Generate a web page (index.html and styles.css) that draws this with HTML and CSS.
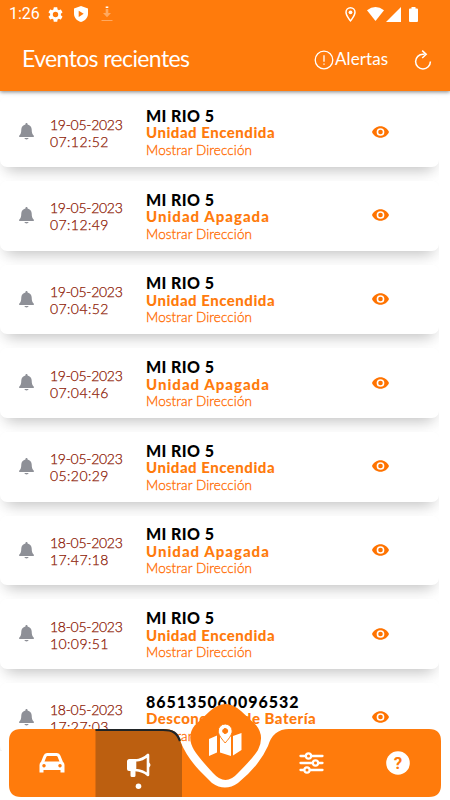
FILE: index.html
```html
<!DOCTYPE html>
<html lang="es">
<head>
<meta charset="utf-8">
<title>Eventos recientes</title>
<link rel="stylesheet" href="styles.css">
</head>
<body>
<svg class="defs" aria-hidden="true">
  <symbol id="bell" viewBox="0 0 14 16"><path d="M7 0C6.400 0 6 .4 6 1v.4C3.700 1.900 2.100 3.600 2.100 6c0 3-.6 4.500-1.800 5.700-.6.600-.2 1.500.6 1.500h12.200c.8 0 1.200-.9.600-1.500C12.500 10.500 11.900 9 11.900 6c0-2.400-1.600-4.100-3.900-4.600V1c0-.6-.4-1-1-1zM4.900 14.200a2.200 1.800 0 0 0 4.200 0z"/></symbol>
  <symbol id="eye" viewBox="1 4.500 22 15"><path d="M12 4.500C7 4.500 2.730 7.610 1 12c1.730 4.390 6 7.500 11 7.500s9.270-3.110 11-7.500c-1.730-4.390-6-7.500-11-7.500zM12 17a5 5 0 1 1 0-10 5 5 0 0 1 0 10zm0-8a3 3 0 1 0 0 6 3 3 0 0 0 0-6z"/></symbol>
</svg>
<div class="phone">
  <header class="header">
    <div class="status">
      <span class="clock">1:26</span>
      <svg class="gear" viewBox="2 2 20 20"><path d="M19.140 12.940c.04-.3.060-.61.060-.94s-.02-.64-.07-.94l2.030-1.580a.49.490 0 0 0 .12-.61l-1.920-3.320a.49.490 0 0 0-.59-.22l-2.390.96a7 7 0 0 0-1.620-.94l-.36-2.540A.48.480 0 0 0 13.920 2.400h-3.840a.48.480 0 0 0-.48.410l-.36 2.540c-.59.240-1.130.57-1.620.94l-2.390-.96a.48.480 0 0 0-.59.220L2.720 8.870a.48.480 0 0 0 .12.610l2.030 1.580a7 7 0 0 0 0 1.880l-2.030 1.580a.49.490 0 0 0-.12.610l1.920 3.320c.12.220.37.290.59.220l2.390-.96c.5.380 1.030.7 1.620.94l.36 2.540c.05.240.24.410.48.410h3.840c.24 0 .44-.17.480-.41l.36-2.540a7 7 0 0 0 1.620-.94l2.390.96c.22.080.47 0 .59-.22l1.920-3.320a.48.480 0 0 0-.12-.61zM12 15.600a3.600 3.600 0 1 1 0-7.200 3.600 3.600 0 0 1 0 7.200z"/></svg>
      <svg class="shield" viewBox="0 0 14 16"><path fill-rule="evenodd" d="M7 0l7 2.600v5.200c0 4-3 7-7 8.200-4-1.200-7-4.200-7-8.200V2.600zM4.700 4.700v6.200l5-3.100z"/></svg>
      <svg class="download" viewBox="0 0 12 16"><path class="faint" d="M4.700 3h2.600v4H10l-4 4.200L2 7h2.700zM.5 14h11v1H.5z"/><path d="M4.700.5h2.600V2H4.700z"/></svg>
      <span class="spacer"></span>
      <svg class="pin" viewBox="5 2 14 20"><path d="M12 2a7 7 0 0 0-7 7c0 5.250 7 13 7 13s7-7.750 7-13a7 7 0 0 0-7-7zM7 9a5 5 0 0 1 10 0c0 2.880-2.880 7.190-5 9.880C9.920 16.210 7 11.850 7 9z"/><circle cx="12" cy="9" r="2.500"/></svg>
      <svg class="wifi" viewBox="0 0 17 14"><path d="M0 3.200Q8.500-3.200 17 3.200L8.500 14z"/></svg>
      <svg class="signal" viewBox="0 0 15 15"><path d="M0 15L15 0v15z"/></svg>
      <svg class="battery" viewBox="0 0 9 15"><path d="M2.500 0h4v1.500H8q1 0 1 1V14q0 1-1 1H1q-1 0-1-1V2.500q0-1 1-1h1.500z"/></svg>
    </div>
    <div class="toolbar">
      <h1 class="title">Eventos recientes</h1>
      <svg class="alert" viewBox="0 0 20 20"><circle cx="10" cy="10" r="8.800"/><path d="M10 5.200v6.500M10 13.500v1.300"/></svg>
      <span class="alert-text">Alertas</span>
      <svg class="refresh" viewBox="0 0 18 20"><path d="M10.500 4.200H9A7.400 7.400 0 1 0 16.400 11.600M8.200.600L12.200 4.300 8.200 8"/></svg>
    </div>
  </header>
  <main class="list" id="list"></main>
  <nav class="nav">
    <svg class="nav-shape" viewBox="0 0 450 110">
      <path class="bar" d="M21 39H163C174 39 178 43 181 53Q187 67 199 80L212 93Q225 102 238 93Q259 76 268 56Q273 39 289 39H429Q441 39 441 51V95Q441 107 429 107H21Q9 107 9 95V51Q9 39 21 39z"/>
      <path class="active-tab" d="M95.500 39H163C174 39 178 43 181 53L182 56V107H95.500z"/>
      <path class="active-line" d="M95.500 40H163C173 40 177 43 180 51"/>
      <path class="diamond" d="M225.500 14Q233 14 241 21L256 35Q265 46 258 60Q253 68 238 83Q225.500 97 213 83Q199 68 194 60Q186 46 195 35L210 21Q218 14 225.500 14z"/>
    </svg>
    <div class="tabs">
      <svg class="tab" viewBox="0 0 86.400 68"><path class="solid" fill-rule="evenodd" d="M32 33l2.500-6.200Q35.500 24 38 24h10q2.500 0 3.500 2.800L54 33q1.500 1 1.500 3v7.500h-4V41h-17v2.500h-4V36q0-2 1.500-3zm3.500-.5h15L48.700 28q-.4-1-1.200-1h-9q-.8 0-1.200 1zM35 35a1.700 1.700 0 1 0 .01 0zm16 0a1.700 1.700 0 1 0 .01 0z"/></svg>
      <svg class="tab" viewBox="0 0 86.400 68"><path class="line" d="M40 31.500Q48 31 53 26V46Q48 41.500 40 41z"/><path class="solid" d="M34.500 30H41V42H40.500V46.500Q40.500 48 39 48H37Q35.500 48 35.500 46.500V42H34Q32 42 32 40V32.500Q32 30 34.500 30zM54 33.500q3 2.500 0 5z"/><circle class="solid" cx="43.500" cy="57.300" r="2.800"/></svg>
      <svg class="tab map" viewBox="0 0 86.400 68"><path class="solid" d="M27 10l8-3.500v17L27 27zm11-4l3 .7 3 5.300 4-5.500h1V27l-11-3.500zM51 7l8.500-3v17L51 26.500z"/><path class="solid outline" fill-rule="evenodd" d="M43.200-5a7 7 0 0 1 7 7c0 4-4.500 9-7 12-2.500-3-7-8-7-12a7 7 0 0 1 7-7zm0 4.500a2.500 2.500 0 1 0 .01 0z"/></svg>
      <svg class="tab" viewBox="0 0 86.400 68"><path class="line thin" d="M32.500 27h22M32.500 34h22M32.500 41h22"/><g class="knob"><circle cx="40.500" cy="27" r="2.600"/><circle cx="47.500" cy="34" r="2.600"/><circle cx="39" cy="41" r="2.600"/></g></svg>
      <svg class="tab" viewBox="0 0 86.400 68"><circle class="solid" cx="43" cy="34" r="11.800"/><text class="question" x="43" y="40">?</text></svg>
    </div>
  </nav>
</div>
<script src="script.js"></script>
</body>
</html>
```
FILE: styles.css
```css
* { box-sizing: border-box; }
body { margin: 0; background: #fff; font-family: Lato, "Liberation Sans", sans-serif; }
svg { display: block; flex: none; fill: currentColor; }
.defs { position: absolute; width: 0; height: 0; }
.phone { position: relative; width: 450px; height: 800px; overflow: hidden; }
.header { position: relative; z-index: 1; height: 91px; background: #ff7b0c; color: #fff; box-shadow: 0 1px 4px rgba(0,0,0,.5); }
.status { display: flex; align-items: center; height: 28px; padding: 0 32px 0 9px; }
.clock { width: 39px; font: 16px/28px Roboto, sans-serif; }
.gear { width: 15px; height: 15px; }
.shield { width: 14px; height: 16px; margin-left: 11px; }
.download { width: 12px; height: 16px; margin-left: 13px; }
.faint { opacity: .35; }
.spacer { flex: 1; }
.pin { width: 11px; height: 15px; margin-right: 11px; }
.wifi { width: 17px; height: 14px; margin-right: 2px; }
.signal { width: 15px; height: 15px; margin-right: 8px; }
.battery { width: 9px; height: 15px; }
.toolbar { display: flex; align-items: center; height: 63px; padding: 0 18px 0 22px; }
.title { flex: 1; margin: -4px 0 0; font-size: 23px; font-weight: 400; letter-spacing: -.62px; }
.alert { width: 20px; height: 20px; margin-right: 1px; fill: none; stroke: #fff; stroke-width: 1.300; }
.alert-text { width: 79px; margin-top: -2px; font-size: 17px; letter-spacing: .1px; }
.refresh { width: 18px; height: 20px; fill: none; stroke: #fff; stroke-width: 1.500; }
.list { display: grid; grid-auto-rows: 69.700px; row-gap: 14px; width: 439px; height: 660px; padding: 6.300px 0 0; overflow: hidden; }
.card { display: grid; grid-template-columns: 31px 96px 226px 18px; align-items: center; padding-left: 19px; border-radius: 7px; background: #fff; box-shadow: 0 10px 14px -7px rgba(0,0,0,.22), 0 5px 12px rgba(0,0,0,.03); }
.bell { width: 15px; height: 17px; color: #8e9097; margin-top: -1px; }
.date { margin-top: 1px; font-size: 14px; font-weight: 300; line-height: 17px; color: #8b1500; white-space: nowrap; -webkit-text-stroke: .25px; }
.day { letter-spacing: -.28px; }
.time { letter-spacing: .42px; }
.info { margin-top: 2px; color: #ff6b00; font-size: 13.500px; line-height: 17.400px; white-space: nowrap; }
.name { font-size: 16px; font-weight: 900; color: #000; letter-spacing: .4px; }
.serial { letter-spacing: .95px; }
.event { font-size: 15px; font-weight: 900; color: #ff7b0c; letter-spacing: .5px; }
.event.off { letter-spacing: 1px; }
.address { font-weight: 300; letter-spacing: .1px; -webkit-text-stroke: .3px; }
.eye { width: 17px; height: 12px; margin-top: -1px; color: #ff7300; }
.nav { position: absolute; left: 0; bottom: 0; width: 450px; height: 110px; }
.nav-shape { width: 450px; height: 110px; }
.bar, .diamond { fill: #ff7b0c; }
.active-tab { fill: #bc5f10; }
.active-line { fill: none; stroke: #202426; stroke-width: 2.200; }
.tabs { position: absolute; left: 9px; top: 39px; display: flex; color: #fff; }
.tab { width: 86.400px; height: 68px; overflow: visible; }
.solid { fill: #fff; }
.line { fill: none; stroke: #fff; stroke-width: 2.600; stroke-linecap: round; stroke-linejoin: round; }
.thin { stroke-width: 2.300; }
.knob { fill: #ff7b0c; stroke: #fff; stroke-width: 2.200; }
.outline { stroke: #ff7b0c; stroke-width: 1; }
.question { fill: #ff7b0c; font: 700 17px Roboto, sans-serif; text-anchor: middle; }
```
FILE: script.js
```js
const events = [
  ["19-05-2023", "07:12:52", "MI RIO 5", "Unidad Encendida"],
  ["19-05-2023", "07:12:49", "MI RIO 5", "Unidad Apagada"],
  ["19-05-2023", "07:04:52", "MI RIO 5", "Unidad Encendida"],
  ["19-05-2023", "07:04:46", "MI RIO 5", "Unidad Apagada"],
  ["19-05-2023", "05:20:29", "MI RIO 5", "Unidad Encendida"],
  ["18-05-2023", "17:47:18", "MI RIO 5", "Unidad Apagada"],
  ["18-05-2023", "10:09:51", "MI RIO 5", "Unidad Encendida"],
  ["18-05-2023", "17:27:03", "865135060096532", "Desconexión de Batería"]
];
document.getElementById("list").innerHTML = events.map(([date, time, name, event]) => `
  <article class="card">
    <svg class="bell"><use href="#bell"/></svg>
    <div class="date"><div class="day">${date}</div><div class="time">${time}</div></div>
    <div class="info"><div class="name ${/^\d+$/.test(name) ? "serial" : ""}">${name}</div><div class="event ${event.endsWith("Apagada") ? "off" : ""}">${event}</div><div class="address">Mostrar Dirección</div></div>
    <svg class="eye"><use href="#eye"/></svg>
  </article>`).join("");
```
